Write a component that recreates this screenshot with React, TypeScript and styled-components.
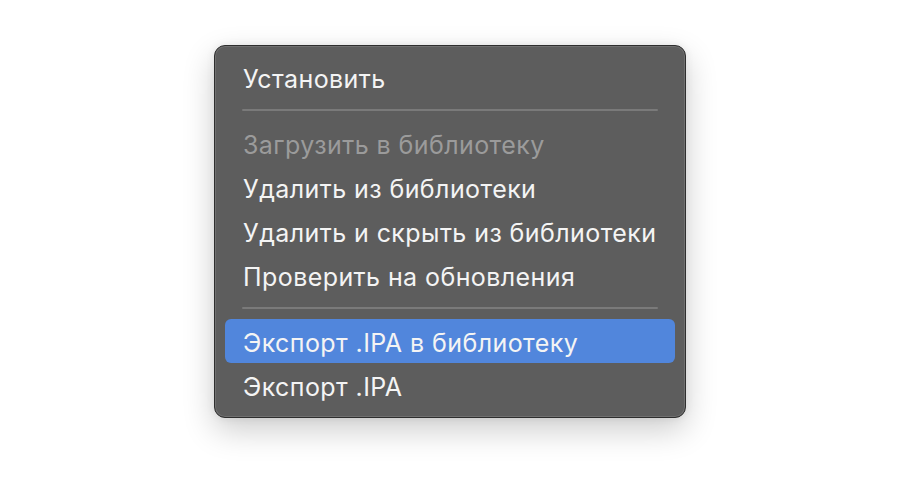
import React from "react";
import styled, { createGlobalStyle } from "styled-components";

const Global = createGlobalStyle`
  html, body { margin: 0; padding: 0; background: #ffffff; }
  body { width: 900px; height: 480px; overflow: hidden; }
`;

const Page = styled.div`
  width: 900px;
  height: 480px;
  display: flex;
  justify-content: flex-start;
  align-items: flex-start;
  padding: 45px 0 0 214px;
  box-sizing: border-box;
`;

const Menu = styled.div`
  width: 472px;
  height: 373px;
  box-sizing: border-box;
  background: #5d5d5d;
  border: 1px solid #2e2e2e;
  border-radius: 11px;
  box-shadow: inset 0 0 0 1px rgba(255, 255, 255, 0.12), 0 12px 32px rgba(0, 0, 0, 0.2), 0 0 8px rgba(0, 0, 0, 0.08);
  padding: 9px 10px 10px;
  display: flex;
  flex-direction: column;
  font-family: "Inter", "Liberation Sans", sans-serif;
`;

const Item = styled.div<{ $disabled?: boolean; $active?: boolean }>`
  height: 44px;
  box-sizing: border-box;
  display: flex;
  align-items: center;
  padding: 3px 18px 0;
  border-radius: 6px;
  font-size: 25px;
  letter-spacing: 0.42px;
  color: ${(p) => (p.$disabled ? "#9b9b9b" : "#f4f4f4")};
  background: ${(p) => (p.$active ? "#5186dc" : "transparent")};
  white-space: nowrap;
`;

const Separator = styled.div`
  height: 22px;
  display: flex;
  align-items: center;
  padding: 0 17px;
  &::after {
    content: "";
    flex: 1;
    height: 2px;
    border-radius: 1px;
    background: #7a7a7a;
  }
`;

export default function App() {
  return (
    <>
      <Global />
      <Page>
        <Menu>
          <Item>Установить</Item>
          <Separator />
          <Item $disabled>Загрузить в библиотеку</Item>
          <Item>Удалить из библиотеки</Item>
          <Item>Удалить и скрыть из библиотеки</Item>
          <Item>Проверить на обновления</Item>
          <Separator />
          <Item $active>Экспорт .IPA в библиотеку</Item>
          <Item>Экспорт .IPA</Item>
        </Menu>
      </Page>
    </>
  );
}
